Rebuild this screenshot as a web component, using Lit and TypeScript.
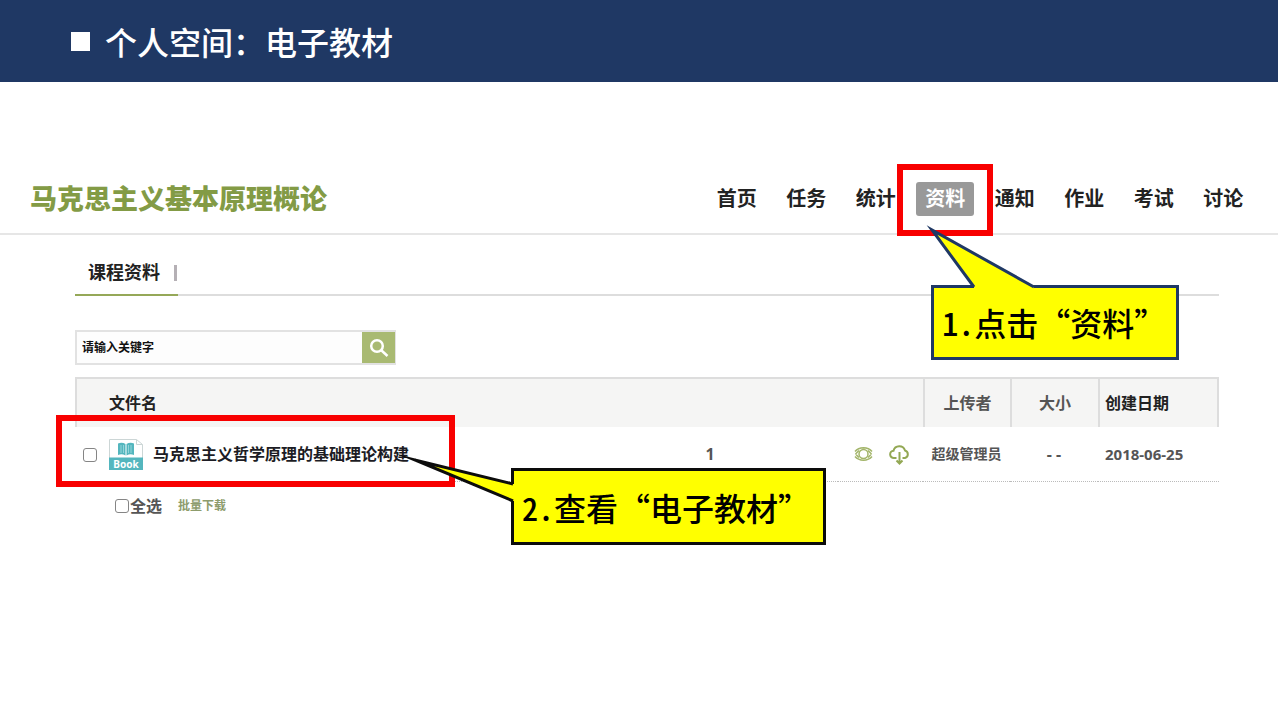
import { LitElement, html, css, svg } from "lit";
import { customElement } from "lit/decorators.js";
import { classMap } from "lit/directives/class-map.js";

interface CourseFile {
  name: string;
  count: number;
  uploader: string;
  size: string;
  created: string;
}

const NAV = ["首页", "任务", "统计", "资料", "通知", "作业", "考试", "讨论"];
const ACTIVE = "资料";
const FILES: CourseFile[] = [
  { name: "马克思主义哲学原理的基础理论构建", count: 1, uploader: "超级管理员", size: "- -", created: "2018-06-25" },
];

@customElement("app-root")
export class AppRoot extends LitElement {
  static styles = css`
    :host {
      display: block;
      min-height: 100vh;
      background: #fff;
      color: #222;
      font-family: "Noto Sans", "Noto Sans CJK SC", sans-serif;
      font-weight: 700;
      overflow: hidden;
    }
    * { box-sizing: border-box; }
    a { color: inherit; text-decoration: none; }
    .banner {
      display: flex;
      align-items: center;
      gap: 15px;
      height: 82px;
      margin-right: 2px;
      padding: 0 71px;
      background: #1f3864;
      color: #fff;
    }
    .bullet { width: 19px; height: 19px; background: #fff; }
    .banner-title {
      margin: 0;
      font: 500 32px/48px "Noto Sans CJK SC", sans-serif;
    }
    .site {
      display: flex;
      align-items: center;
      justify-content: space-between;
      height: 71px;
      margin: 82px 2px 0 0;
      padding: 0 20px 0 30px;
      border-bottom: 2px solid #e6e6e6;
    }
    .course { margin: 0; font-size: 27px; line-height: 40px; font-weight: 900; color: #839b45; }
    .nav { display: grid; grid-template-columns: repeat(8, 1fr); width: 556px; }
    .nav-item { position: relative; display: flex; justify-content: center; }
    .nav-link { padding: 0 9px; font-size: 20px; line-height: 34px; border-radius: 3px; white-space: nowrap; }
    .active { background: #999; color: #fff; }
    .main { padding: 0 61px 0 75px; }
    .tabs { display: flex; height: 61px; border-bottom: 2px solid #ddd; }
    .tab {
      display: flex;
      align-items: center;
      gap: 14px;
      height: 61px;
      padding: 24px 1px 8px 13px;
      border-bottom: 2px solid #95a858;
      font-size: 18px;
      line-height: 27px;
    }
    .bar { width: 3px; height: 16px; background: #b5b0b5; }
    .search {
      display: flex;
      width: 321px;
      height: 35px;
      margin: 34px 0 12px;
      border: 2px solid #e2e2e2;
      border-right-width: 1px;
    }
    .search-input {
      flex: 1;
      min-width: 0;
      padding: 0 5px;
      border: 0;
      outline: 0;
      background: #fdfdfd;
      font: inherit;
      font-size: 12px;
    }
    .search-input::placeholder { color: #111; opacity: 1; }
    .search-button {
      display: grid;
      place-items: center;
      width: 33px;
      padding: 0;
      border: 0;
      background: #a9ba72;
    }
    .files { width: 100%; table-layout: fixed; border-spacing: 0; }
    .col-check { width: 34px; }
    .col-count { width: 256px; }
    .col-actions { width: 85px; }
    .col-uploader { width: 87px; }
    .col-size { width: 88px; }
    .col-date { width: 121px; }
    .head {
      height: 50px;
      padding: 0;
      border-top: 2px solid #ddd;
      border-left: 2px solid #ddd;
      background: #f5f5f4;
      font-size: 16px;
      line-height: 24px;
      color: #555;
    }
    .head-name { padding-left: 32px; text-align: left; color: #222; }
    .head-date { padding-left: 5px; border-right: 2px solid #ddd; text-align: left; color: #222; }
    .cell {
      height: 55px;
      padding: 0;
      border-bottom: 1px dotted #bbb;
      text-align: center;
      font-size: 14px;
      line-height: 24px;
      color: #555;
    }
    .cell-check { position: relative; padding-right: 4px; }
    .cell-name { text-align: left; }
    .cell-count { font-size: 16px; }
    .cell-size { font-size: 16px; }
    .cell-date { padding-left: 7px; text-align: left; font-size: 15px; }
    .check {
      appearance: none;
      display: inline-block;
      width: 14px;
      height: 14px;
      margin: 0;
      border: 1px solid #858585;
      border-radius: 3px;
      background: #fff;
      vertical-align: middle;
    }
    .name { display: flex; align-items: center; gap: 10px; font-size: 16px; color: #1c1c24; white-space: nowrap; }
    .actions { display: flex; align-items: center; justify-content: flex-end; gap: 16px; padding-right: 13px; }
    .icon-button { display: flex; padding: 0; border: 0; background: none; }
    .bulk { display: flex; align-items: center; gap: 16px; padding: 12px 40px; line-height: 24px; }
    .all { display: flex; align-items: center; gap: 1px; font-size: 16px; color: #555; }
    .download { font-size: 12px; color: #8d9c6c; }

    /* Tutorial overlay: red frames and callouts lie over the page. */
    .frame { position: absolute; z-index: 1; border: 6px solid #f80000; pointer-events: none; }
    .frame-nav { left: 50%; top: -18px; width: 96px; height: 72px; margin-left: -48px; }
    .frame-row { left: -19px; top: -12px; width: 399px; height: 72px; }
    .callout {
      position: absolute;
      display: flex;
      align-items: center;
      padding: 0 8px;
      border: 3px solid #1f3864;
      background: #ff0;
      color: #000;
      font: 500 32px/48px "Noto Sans CJK SC", sans-serif;
      white-space: nowrap;
    }
    .number { width: 32px; font-feature-settings: "hwid"; }
    .callout-nav { left: 28px; top: 115px; width: 248px; height: 75px; }
    .callout-row { left: 449px; top: 47px; width: 315px; height: 77px; border-color: #0c0c0c; }
    .tail { position: absolute; overflow: visible; }
    .tail-nav { left: -3px; top: -60px; }
    .tail-row { left: -109px; top: -14px; }
  `;

  private navOverlay() {
    return html`<div class="frame frame-nav">
      <div class="callout callout-nav">
        <svg class="tail tail-nav" width="106" height="62" aria-hidden="true">
          ${svg`<path d="M43 58 L1 3 L103 58 V62 H43Z" fill="#ff0"/><path d="M43 59 L1 2 L103 59" fill="none" stroke="#1f3864" stroke-width="3" stroke-miterlimit="20"/>`}
        </svg>
        <span class="number">1.</span><span>点击“资料”</span>
      </div>
    </div>`;
  }

  private rowOverlay() {
    return html`<div class="frame frame-row">
      <div class="callout callout-row">
        <svg class="tail tail-row" width="110" height="50" aria-hidden="true">
          ${svg`<path d="M107.500 27 L10 3 L107.500 44 L110 44 V27Z" fill="#ff0"/><path d="M108 27 L10 3 L108 44" fill="none" stroke="#0c0c0c" stroke-width="3" stroke-miterlimit="20"/>`}
        </svg>
        <span class="number">2.</span><span>查看“电子教材”</span>
      </div>
    </div>`;
  }

  private bookIcon() {
    return html`<svg width="34" height="31" viewBox="0 0 34 31" aria-hidden="true">
      <path d="M.5 19V.5H27.500L33.500 5.500V19" fill="#fff" stroke="#ccd6d6"/>
      <path d="M27.500.5V5.500H33.500" fill="none" stroke="#ccd6d6"/>
      <path d="M9 4.500Q13 3 16.500 5V16.500Q13 14.500 9 16ZM25 4.500Q21 3 17.500 5V16.500Q21 14.500 25 16Z" fill="#54b6be"/>
      <path d="M12 6V14M14.500 6V14M19.500 6V14M22 6V14" stroke="#a5dce0" stroke-width=".8"/>
      <rect y="18.500" width="34" height="12.500" fill="#54b6be"/>
      <text x="17" y="28.500" text-anchor="middle" font-family="Noto Sans, sans-serif" font-size="10" font-weight="700" fill="#fff">Book</text>
    </svg>`;
  }

  private row(file: CourseFile, i: number) {
    return html`<tr>
      <td class="cell cell-check">
        <input class="check" type="checkbox" id="file-${i}" />
        ${i === 0 ? this.rowOverlay() : ""}
      </td>
      <td class="cell cell-name"><label class="name" for="file-${i}">${this.bookIcon()}${file.name}</label></td>
      <td class="cell cell-count">${file.count}</td>
      <td class="cell">
        <div class="actions">
          <button class="icon-button" aria-label="查看">
            <svg width="19" height="16" viewBox="0 0 19 16" fill="none" stroke="#a3b56a" stroke-width="1.500">
              <path d="M1 5.500Q4 2 9.500 1.800Q15 2 18 5.500M1 10.500Q4 14 9.500 14.200Q15 14 18 10.500M1.500 8L5 4.500M1.500 8L5 11.500M17.500 8L14 4.500M17.500 8L14 11.500"/>
              <circle cx="9.500" cy="8" r="4.500"/>
            </svg>
          </button>
          <button class="icon-button" aria-label="下载">
            <svg width="21" height="21" viewBox="0 0 21 21" fill="none" stroke="#93a854" stroke-width="2">
              <path d="M7.500 14H5A3.600 3.600 0 0 1 4.500 6.800A6 6 0 0 1 16 6.500A3.900 3.900 0 0 1 16 14H13.500M10.500 8V19M7.500 16.500L10.500 19.500L13.500 16.500"/>
            </svg>
          </button>
        </div>
      </td>
      <td class="cell">${file.uploader}</td>
      <td class="cell cell-size">${file.size}</td>
      <td class="cell cell-date">${file.created}</td>
    </tr>`;
  }

  render() {
    return html`
      <header class="banner" lang="zh-CN">
        <span class="bullet"></span>
        <h1 class="banner-title">个人空间：电子教材</h1>
      </header>
      <div class="site" lang="zh-CN">
        <h2 class="course">马克思主义基本原理概论</h2>
        <nav class="nav">
          ${NAV.map(
            (t) => html`<div class="nav-item">
              <a href="#" class=${classMap({ "nav-link": true, active: t === ACTIVE })}>${t}</a>
              ${t === ACTIVE ? this.navOverlay() : ""}
            </div>`
          )}
        </nav>
      </div>
      <main class="main" lang="zh-CN">
        <div class="tabs">
          <a class="tab" href="#">课程资料<span class="bar"></span></a>
        </div>
        <form class="search">
          <input class="search-input" type="text" placeholder="请输入关键字" aria-label="请输入关键字" />
          <button class="search-button" type="button" aria-label="搜索">
            <svg width="20" height="20" viewBox="0 0 20 20" fill="none" stroke="#fff" stroke-width="2.500">
              <circle cx="8" cy="8" r="5.800"/><path d="M12 12L18.500 18"/>
            </svg>
          </button>
        </form>
        <table class="files">
          <colgroup>
            <col class="col-check" /><col /><col class="col-count" /><col class="col-actions" />
            <col class="col-uploader" /><col class="col-size" /><col class="col-date" />
          </colgroup>
          <thead>
            <tr>
              <th class="head head-name" colspan="4">文件名</th>
              <th class="head">上传者</th>
              <th class="head">大小</th>
              <th class="head head-date">创建日期</th>
            </tr>
          </thead>
          <tbody>${FILES.map((f, i) => this.row(f, i))}</tbody>
        </table>
        <div class="bulk">
          <label class="all"><input class="check" type="checkbox" />全选</label>
          <a class="download" href="#">批量下载</a>
        </div>
      </main>
    `;
  }
}
